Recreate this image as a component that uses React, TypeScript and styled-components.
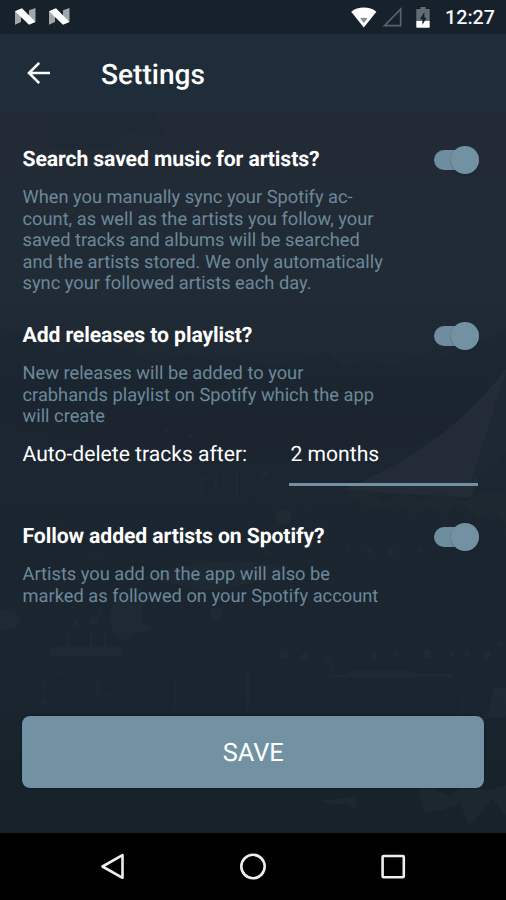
import React, { useState } from "react";
import styled, { createGlobalStyle } from "styled-components";

const GlobalStyle = createGlobalStyle`
  *, *::before, *::after { box-sizing: border-box; }
  html, body { margin: 0; padding: 0; background: #000; }
  body, button { font-family: Roboto, "Noto Sans", sans-serif; text-rendering: geometricPrecision; }
  h1, h2, p { margin: 0; }
`;

const accent = "#7292a4";

const Screen = styled.div`
  width: 506px;
  height: 900px;
  display: flex;
  flex-direction: column;
  overflow: hidden;
  color: #fff;
`;

const StatusBar = styled.header`
  height: 34px;
  flex: none;
  display: flex;
  align-items: center;
  justify-content: space-between;
  padding: 0 11px 0 15px;
  background: #17212c;
`;

const StatusGroup = styled.div<{ $gap?: number }>`
  display: flex;
  align-items: center;
  gap: ${(p) => p.$gap ?? 0}px;
`;

const Clock = styled.span`
  width: 50px;
  font-size: 19.7px;
  line-height: 24px;
  font-weight: 500;
  color: #f4f6f7;
  margin-left: 15px;
  padding-top: 2px;
  white-space: nowrap;
`;

const AppBar = styled.div`
  height: 78px;
  flex: none;
  display: flex;
  align-items: center;
  gap: 49px;
  padding: 0 25px;
  background: #1f2d3a;
`;

const IconButton = styled.button`
  display: flex;
  padding: 0 0 1px;
  border: 0;
  background: none;
  color: #fff;
`;

const Title = styled.h1`
  font-size: 28.1px;
  line-height: 34px;
  font-weight: 500;
  padding-top: 3px;
`;

const Content = styled.main`
  position: relative;
  isolation: isolate;
  height: 721px;
  flex: none;
  display: flex;
  flex-direction: column;
  padding: 34px 22px 0 22.5px;
  background: linear-gradient(#222b35 0, #212b35 24%, #1c2630 43%, #1b252f 80%, #17222b 92%, #17222b 100%);
`;

const Backdrop = styled.svg`
  position: absolute;
  inset: 0;
  z-index: -1;
  opacity: 0.65;
`;

const Setting = styled.section<{ $height: number }>`
  height: ${(p) => p.$height}px;
  flex: none;
`;

const SettingHeader = styled.div`
  height: 27px;
  display: flex;
  align-items: center;
  justify-content: space-between;
  padding-right: 5px;
`;

const SettingTitle = styled.h2`
  font-size: 21.2px;
  line-height: 26px;
  font-weight: 700;
  letter-spacing: -0.11px;
`;

const Description = styled.p`
  margin-top: 14px;
  width: 375px;
  font-size: 18.27px;
  line-height: 21.5px;
  color: #6c8899;
  white-space: pre-line;
`;

const Switch = styled.button`
  width: 46px;
  height: 28px;
  display: flex;
  align-items: center;
  padding: 0;
  border: 0;
  background: none;
`;

const Track = styled.span<{ $on: boolean }>`
  width: 44.5px;
  height: 20px;
  display: flex;
  align-items: center;
  justify-content: ${(p) => (p.$on ? "flex-end" : "flex-start")};
  margin-left: 1px;
  border-radius: 10px;
  background: ${(p) => (p.$on ? "#6e8ea0" : "#4a5964")};
`;

const Thumb = styled.span`
  width: 28px;
  height: 28px;
  flex: none;
  border-radius: 50%;
  background: ${accent};
  box-shadow: 0 1px 2px rgba(16, 25, 34, 0.35);
`;

const DeleteRow = styled.div`
  display: flex;
  align-items: flex-start;
  justify-content: space-between;
  margin-top: 13px;
  padding-right: 6px;
`;

const DeleteLabel = styled.span`
  font-size: 21.1px;
  line-height: 26px;
  padding-top: 1px;
`;

const Picker = styled.button`
  width: 189px;
  height: 45px;
  display: flex;
  align-items: flex-start;
  padding: 1px 1.5px 0;
  border: 0;
  border-bottom: 3px solid ${accent};
  background: none;
  color: #fff;
  font-size: 21.1px;
  line-height: 26px;
`;

const SaveButton = styled.button`
  width: 461.5px;
  height: 72px;
  flex: none;
  display: flex;
  align-items: center;
  justify-content: center;
  margin-left: -0.5px;
  padding: 4px 0 0 1px;
  border: 0;
  border-radius: 8px;
  background: ${accent};
  box-shadow: 0 0 2px rgba(3, 20, 38, 0.9);
  color: #fff;
  font-size: 25.3px;
`;

const NavBar = styled.nav`
  height: 67px;
  flex: none;
  display: flex;
  align-items: center;
  justify-content: space-between;
  padding: 0 99px;
  background: #000;
`;

const NougatIcon = () => (
  <svg width="21" height="18" viewBox="0 0 21 18">
    <path d="M0 3.5 6 .8V14L0 16.8Z" fill="#a0a6aa" />
    <path d="M14 2.2 20.5 0V13.5L14 16Z" fill="#a0a6aa" />
    <path d="M0 3.2 7 .3 20.5 14 14 16.8Z" fill="#fff" />
  </svg>
);

const WifiIcon = () => (
  <svg width="26" height="21" viewBox="0 0 26 21">
    <path d="M.2 4.8C7-.8 18.6-.8 25.4 4.8L12.8 20.5Z" fill="#fff" />
    <path d="M9.1 11.2Q12.8 10.4 16.5 11.2L12.8 15.9Z" fill="#8b8d8e" />
  </svg>
);

const SignalIcon = () => (
  <svg width="20" height="20" viewBox="0 0 20 20">
    <path d="M2.5 18.7H18.7V2.2Z" fill="none" stroke="#596169" strokeWidth="1.7" />
  </svg>
);

const BatteryIcon = () => (
  <svg width="14" height="21" viewBox="0 0 14 21">
    <path d="M4.5 0h5v2H13q.7 0 .7.8V14H.3V2.8Q.3 2 1 2h3.5Z" fill="#646c73" />
    <path d="M.3 14h13.4v6q0 .8-.8.8H1.1q-.8 0-.8-.8Z" fill="#fff" />
    <path d="M8.4 5 3.8 12.2h2.6v5.8L10.6 10.4H8.4Z" fill="#17212c" />
  </svg>
);

const BackArrow = () => (
  <svg width="27" height="24" viewBox="0 0 27 24" fill="none" stroke="#fff" strokeWidth="2.6">
    <path d="M25 12H4M14.2 1.8 4 12l10.2 10.2" />
  </svg>
);

/* Faint festival silhouette: tents, tree line, strings of lights. */
const Festival = () => (
  <Backdrop width="506" height="721" viewBox="0 112 506 721">
    <path d="M48 112H154L167 137 130 133 110 148H50Z" fill="#1c2832" opacity=".75" />
    <path d="M0 327 22 332 32 343 60 354 80 347 100 353 126 349 138 357 160 362 186 354 209 360 230 357 270 366 315 356 326 352 344 368 368 360 394 367 413 356 435 362 457 351 484 342 506 329V420Q250 500 0 420Z" fill="#1a242e" opacity=".45" />
    <path d="M506 369C470 414 429 454 342 490L470 498 506 415Z" fill="#27303a" />
    <path d="M506 370V453L470 485Z" fill="#202a34" />
    <path d="M342 495 370 489 382 503 404 493 420 500 442 492 466 501 488 490 506 495V524L492 510 478 519 460 503 444 514 427 507 415 514 397 503 382 510Z" fill="#222c36" opacity=".65" />
    <g fill="#29343e" opacity=".48">
      <path d="M145 578Q178 562 236 561 264 562 289 567L277 578 207 591Z" />
      <path d="M111 613Q111 592 145 594L141 620 153 630 137 633 122 641Q108 630 111 613Z" />
      <path d="M50 647H122V656H50Z" />
      <path d="M345 671H411L417 674H452V677H310L348 674Z" />
      <path d="M246 673H249V709H246Z" />
      <path d="M0 611 12 609 21 618 16 628 0 630Z" />
      <path d="M506 688 494 687 487 717H506Z" />
      <path d="M318 801 357 796 356 810 347 804 334 805Z" />
      <path d="M418 790 430 787 450 796 464 786 487 790 506 785V816L493 799 480 813 470 827 460 804 442 810 425 813Z" />
    </g>
    <g fill="#28333c" opacity=".55">
      <circle cx="284" cy="517" r="8" /><circle cx="216" cy="613" r="6" />
      <circle cx="94" cy="621" r="4" /><circle cx="76" cy="623" r="3" />
      <circle cx="101" cy="613" r="2" /><circle cx="369" cy="551" r="3" />
      <circle cx="390" cy="552" r="4" /><circle cx="421" cy="550" r="2" />
      <circle cx="348" cy="547" r="2" /><circle cx="96" cy="556" r="2" />
      <circle cx="267" cy="553" r="2" /><circle cx="166" cy="430" r="2" />
      <circle cx="190" cy="436" r="2" /><circle cx="265" cy="474" r="3" />
      <circle cx="284" cy="655" r="4" /><circle cx="305" cy="657" r="4" />
      <circle cx="328" cy="659" r="4" /><circle cx="374" cy="656" r="4" />
      <circle cx="395" cy="654" r="2" /><circle cx="427" cy="654" r="4" />
      <circle cx="452" cy="654" r="2" /><circle cx="467" cy="654" r="3" />
      <circle cx="487" cy="655" r="4" /><circle cx="501" cy="644" r="2" />
      <circle cx="32" cy="665" r="2" /><circle cx="59" cy="673" r="2" />
    </g>
    <path d="M202 475V500M202 480 216 473V493M237 470V499M300 488 309 505M332 658V675M68 632V649M91 631V649M105 633V649M44 680V705M35 699 52 705M92 694 115 695M98 680V700M462 694V717M175 683V708" fill="none" stroke="#28333c" strokeWidth="1.5" opacity=".55" />
  </Backdrop>
);

const Toggle = ({ label }: { label: string }) => {
  const [on, setOn] = useState(true);
  return (
    <Switch role="switch" aria-checked={on} aria-label={label} onClick={() => setOn(!on)}>
      <Track $on={on}>
        <Thumb />
      </Track>
    </Switch>
  );
};

interface SettingItemProps {
  title: string;
  description: string;
  height: number;
  children?: React.ReactNode;
}

const SettingItem = ({ title, description, height, children }: SettingItemProps) => (
  <Setting $height={height}>
    <SettingHeader>
      <SettingTitle>{title}</SettingTitle>
      <Toggle label={title} />
    </SettingHeader>
    <Description>{description}</Description>
    {children}
  </Setting>
);

export default function App() {
  return (
    <>
      <GlobalStyle />
      <Screen>
        <StatusBar>
          <StatusGroup $gap={13}>
            <NougatIcon />
            <NougatIcon />
          </StatusGroup>
          <StatusGroup>
            <StatusGroup $gap={5}>
              <WifiIcon />
              <SignalIcon />
            </StatusGroup>
            <StatusGroup $gap={14}>
              <span />
              <BatteryIcon />
            </StatusGroup>
            <Clock>12:27</Clock>
          </StatusGroup>
        </StatusBar>
        <AppBar>
          <IconButton aria-label="Back">
            <BackArrow />
          </IconButton>
          <Title>Settings</Title>
        </AppBar>
        <Content>
          <Festival />
          <SettingItem
            height={176}
            title="Search saved music for artists?"
            description={
              "When you manually sync your Spotify ac-\ncount, as well as the artists you follow, your\nsaved tracks and albums will be searched\nand the artists stored. We only automatically\nsync your followed artists each day."
            }
          />
          <SettingItem
            height={201}
            title="Add releases to playlist?"
            description={
              "New releases will be added to your\ncrabhands playlist on Spotify which the app\nwill create"
            }
          >
            <DeleteRow>
              <DeleteLabel>Auto-delete tracks after:</DeleteLabel>
              <Picker>2 months</Picker>
            </DeleteRow>
          </SettingItem>
          <SettingItem
            height={192.5}
            title="Follow added artists on Spotify?"
            description={
              "Artists you add on the app will also be\nmarked as followed on your Spotify account"
            }
          />
          <SaveButton>SAVE</SaveButton>
        </Content>
        <NavBar>
          <svg width="27" height="28" viewBox="0 0 27 28">
            <path d="M23.5 2.2V24.8L3.5 13.5Z" fill="none" stroke="#eee" strokeWidth="2.6" strokeLinejoin="round" />
          </svg>
          <svg width="28" height="28" viewBox="0 0 28 28">
            <circle cx="14" cy="13.5" r="11.7" fill="none" stroke="#eee" strokeWidth="2.6" />
          </svg>
          <svg width="28" height="28" viewBox="0 0 28 28">
            <rect x="3.6" y="3" width="21.2" height="21.2" rx="1" fill="none" stroke="#eee" strokeWidth="2.6" />
          </svg>
        </NavBar>
      </Screen>
    </>
  );
}
